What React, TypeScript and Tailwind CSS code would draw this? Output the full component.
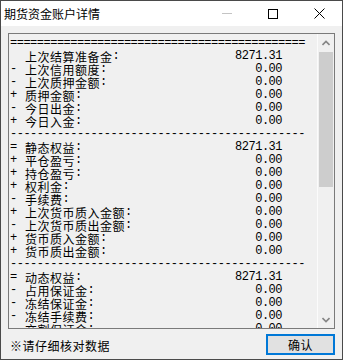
type Line =
  | { kind: 'rule'; ch: string }
  | { kind: 'row'; sign: string; label: string; value: string };

const lines: Line[] = [
  { kind: 'rule', ch: '=' },
  { kind: 'row', sign: ' ', label: '上次结算准备金', value: '8271.31' },
  { kind: 'row', sign: '-', label: '上次信用额度', value: '0.00' },
  { kind: 'row', sign: '-', label: '上次质押金额', value: '0.00' },
  { kind: 'row', sign: '+', label: '质押金额', value: '0.00' },
  { kind: 'row', sign: '-', label: '今日出金', value: '0.00' },
  { kind: 'row', sign: '+', label: '今日入金', value: '0.00' },
  { kind: 'rule', ch: '-' },
  { kind: 'row', sign: '=', label: '静态权益', value: '8271.31' },
  { kind: 'row', sign: '+', label: '平仓盈亏', value: '0.00' },
  { kind: 'row', sign: '+', label: '持仓盈亏', value: '0.00' },
  { kind: 'row', sign: '+', label: '权利金', value: '0.00' },
  { kind: 'row', sign: '-', label: '手续费', value: '0.00' },
  { kind: 'row', sign: '+', label: '上次货币质入金额', value: '0.00' },
  { kind: 'row', sign: '-', label: '上次货币质出金额', value: '0.00' },
  { kind: 'row', sign: '+', label: '货币质入金额', value: '0.00' },
  { kind: 'row', sign: '+', label: '货币质出金额', value: '0.00' },
  { kind: 'rule', ch: '-' },
  { kind: 'row', sign: '=', label: '动态权益', value: '8271.31' },
  { kind: 'row', sign: '-', label: '占用保证金', value: '0.00' },
  { kind: 'row', sign: '-', label: '冻结保证金', value: '0.00' },
  { kind: 'row', sign: '-', label: '冻结手续费', value: '0.00' },
  { kind: 'row', sign: '-', label: '交割保证金', value: '0.00' },
];

// SimSun-like half-width cells: ~6.7px per ASCII char
const mono = "font-['Liberation_Mono',monospace] text-[12px] tracking-[-0.5px]";
const cjk = "font-['Noto_Sans_CJK_SC',sans-serif] text-[12px] tracking-[0.5px]";

function Chevron({ up }: { up?: boolean }) {
  return (
    <svg width="8" height="6" viewBox="0 0 8 6">
      <polyline
        points={up ? '0.5,5 4,1.5 7.5,5' : '0.5,1 4,4.5 7.5,1'}
        fill="none"
        stroke="#858585"
        strokeWidth="1.6"
      />
    </svg>
  );
}

export default function App() {
  return (
    <div className="w-[343px] h-[360px] flex flex-col bg-[#f0f0f0] border border-[#4a4a4a] overflow-hidden text-black">
      {/* title bar */}
      <div className="h-[25px] bg-white flex items-stretch shrink-0">
        <div className="flex-1 flex items-center pl-[3px] font-['Noto_Sans_CJK_SC',sans-serif] text-[12px] leading-[25px]">
          期货资金账户详情
        </div>
        <div className="w-[46px] flex items-center justify-center">
          <span className="block w-[10px] h-px bg-[#c4c4c4]" />
        </div>
        <div className="w-[46px] flex items-center justify-center">
          <span className="block w-[10px] h-[10px] border border-black" />
        </div>
        <div className="w-[46px] flex items-center justify-center">
          <svg width="11" height="11" viewBox="0 0 11 11">
            <path d="M0.5 0.5 L10.5 10.5 M10.5 0.5 L0.5 10.5" stroke="#000" strokeWidth="1" />
          </svg>
        </div>
      </div>

      {/* body */}
      <div className="flex-1 flex flex-col px-[7px] pt-[7px]">
        <div className="h-[296px] border border-[#7a7a7a] flex overflow-hidden">
          <div className="flex-1 overflow-hidden pt-[3px] pl-px">
            {lines.map((l, i) =>
              l.kind === 'rule' ? (
                <div key={i} className={`h-[13px] leading-[13px] whitespace-pre ${mono}`}>
                  {l.ch.repeat(44)}
                </div>
              ) : (
                <div key={i} className="h-[13px] w-[272px] flex items-center whitespace-pre">
                  <span className={`w-[15px] ${mono} leading-[13px]`}>{l.sign}</span>
                  <span className={`${cjk} leading-[13px]`}>{l.label}</span>
                  <span className={`${mono} leading-[13px]`}>:</span>
                  <span className={`flex-1 text-right ${mono} leading-[13px]`}>{l.value}</span>
                </div>
              )
            )}
          </div>
          <div className="w-[17px] flex flex-col border-l border-[#fbfbfb] bg-[#f0f0f0]">
            <div className="h-[17px] flex items-center justify-center">
              <Chevron up />
            </div>
            <div className="flex-1 flex flex-col pt-px">
              <div className="h-[135px] mx-px bg-[#cdcdcd]" />
            </div>
            <div className="h-[17px] flex items-center justify-center">
              <Chevron />
            </div>
          </div>
        </div>

        <div className="flex items-center justify-between mt-[5px] h-[21px]">
          <span className={`${cjk} leading-[14px] pl-[2px] pt-[2px]`}>※请仔细核对数据</span>
          <button className={`w-[69px] h-[21px] border-2 border-[#0078d7] bg-[#e1e1e1] ${cjk} leading-none flex items-center justify-center`}>
            确认
          </button>
        </div>
      </div>
    </div>
  );
}
